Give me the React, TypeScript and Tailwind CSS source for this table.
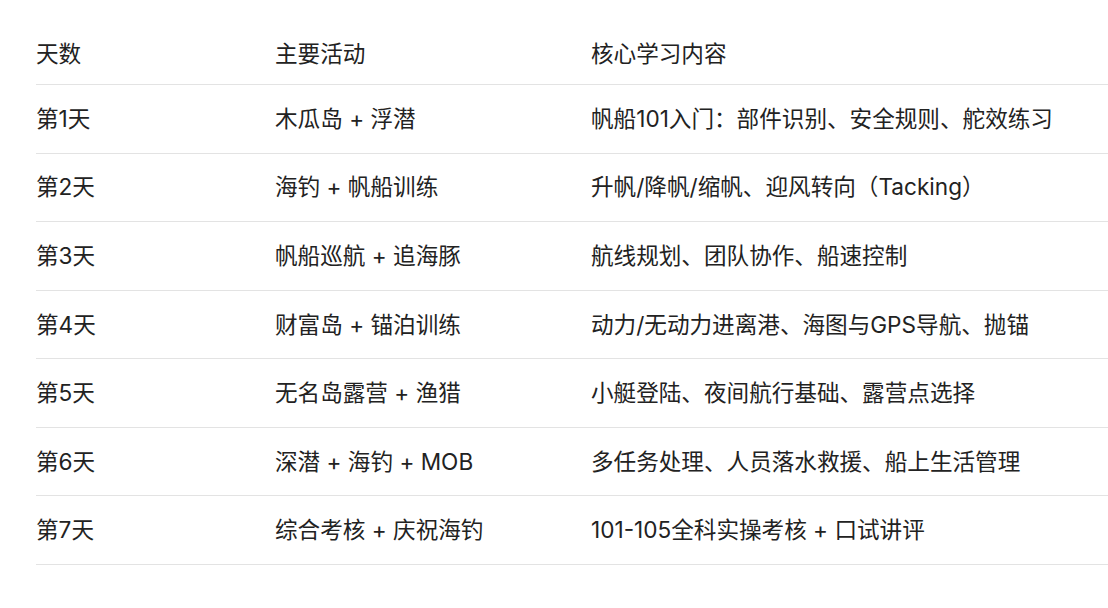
const rows = [
  { day: '第1天', activity: '木瓜岛 + 浮潜', content: '帆船101入门：部件识别、安全规则、舵效练习' },
  { day: '第2天', activity: '海钓 + 帆船训练', content: '升帆/降帆/缩帆、迎风转向（Tacking）' },
  { day: '第3天', activity: '帆船巡航 + 追海豚', content: '航线规划、团队协作、船速控制' },
  { day: '第4天', activity: '财富岛 + 锚泊训练', content: '动力/无动力进离港、海图与GPS导航、抛锚' },
  { day: '第5天', activity: '无名岛露营 + 渔猎', content: '小艇登陆、夜间航行基础、露营点选择' },
  { day: '第6天', activity: '深潜 + 海钓 + MOB', content: '多任务处理、人员落水救援、船上生活管理' },
  { day: '第7天', activity: '综合考核 + 庆祝海钓', content: '101-105全科实操考核 + 口试讲评' },
];

export default function App() {
  return (
    <div
      className="w-[1108px] h-[608px] bg-white pt-[24px] pl-[36px] text-[#222] text-[22.6px] overflow-hidden"
      style={{ fontFamily: 'Inter, "Noto Sans CJK SC", sans-serif' }}
    >
      <div className="grid grid-cols-[239px_316px_1fr] h-[61px] items-center border-b border-[#e3e3e3]">
        <div>天数</div>
        <div>主要活动</div>
        <div>核心学习内容</div>
      </div>
      {rows.map((row) => (
        <div
          key={row.day}
          className="grid grid-cols-[239px_316px_1fr] h-[68.57px] items-center border-b border-[#e3e3e3]"
        >
          <div>{row.day}</div>
          <div>{row.activity}</div>
          <div>{row.content}</div>
        </div>
      ))}
    </div>
  );
}
